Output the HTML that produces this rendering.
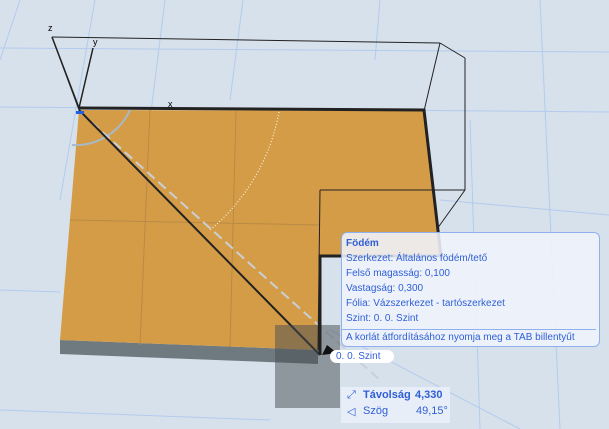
<!DOCTYPE html><html><head><style>
body{margin:0;width:609px;height:429px;overflow:hidden;background:#d7e1ec;font-family:"Liberation Sans",sans-serif}
.tip{position:absolute;left:341px;top:232px;width:257px;height:113px;border:1px solid #8fb0ee;border-radius:6px;background:rgba(240,244,252,.88);color:#2f5fd6;font-size:10px;line-height:15px}
.tip div{padding-left:4px;white-space:nowrap}
.st{position:absolute;color:#2f5fd6;font-size:11px;white-space:nowrap}
</style></head><body>
<svg width="609" height="429" style="position:absolute;left:0;top:0">
<g stroke="#b3cbee" stroke-width="1" fill="none">
<line x1="0" y1="48" x2="609" y2="52"/><line x1="0" y1="107" x2="609" y2="112"/>
<line x1="20" y1="0" x2="0" y2="60"/><line x1="95" y1="0" x2="60" y2="200"/><line x1="165" y1="0" x2="140" y2="200"/>
<line x1="243" y1="0" x2="230" y2="100"/><line x1="380" y1="0" x2="375" y2="60"/><line x1="540" y1="0" x2="560" y2="429"/>
<line x1="470" y1="120" x2="480" y2="429"/><line x1="330" y1="330" x2="520" y2="429"/><line x1="440" y1="200" x2="609" y2="215"/>
<line x1="0" y1="290" x2="60" y2="292"/><line x1="0" y1="410" x2="270" y2="420"/>
</g>
<polygon points="60,340 318,350 318,364 60,354" fill="#6f7a80"/>
<polygon points="79,110 424,111 441,255 320,255 318,350 60,340" fill="#d59c48"/>
<g stroke="#b98a45" stroke-width="1"><line x1="70" y1="220" x2="320" y2="225"/><line x1="150" y1="110" x2="140" y2="345"/><line x1="236" y1="111" x2="230" y2="347"/></g>
<path d="M279,112 A200,200 0 0 1 210,230" stroke="#fff" stroke-dasharray="1,2" fill="none"/>
<path d="M130,110 A60,60 0 0 1 72,145" stroke="#a9b8c6" stroke-width="2" fill="none"/>
<line x1="80" y1="112" x2="380" y2="380" stroke="#c8cfd6" stroke-width="2" stroke-dasharray="10,5"/>
<line x1="79" y1="110" x2="320" y2="355" stroke="#222" stroke-width="2"/>
<rect x="275" y="325" width="65" height="83" fill="rgba(70,75,80,.5)"/>
<g stroke="#222" fill="none" stroke-width="1">
<line x1="52" y1="37" x2="440" y2="43"/><line x1="440" y1="43" x2="465" y2="58"/><line x1="465" y1="58" x2="465" y2="190"/>
<line x1="440" y1="43" x2="424" y2="111"/><line x1="465" y1="190" x2="437" y2="229"/><line x1="52" y1="37" x2="79" y2="110"/>
<line x1="465" y1="190" x2="320" y2="190"/><line x1="320" y1="190" x2="318" y2="350"/>
</g>
<g stroke="#222" stroke-width="3" fill="none"><polyline points="79,108 424,110 441,256 320,256 320,355"/></g>
<g stroke="#222" stroke-width="1.5"><line x1="79" y1="108" x2="52" y2="37"/><line x1="79" y1="108" x2="93" y2="48"/></g>
<rect x="76" y="111" width="8" height="3" fill="#1f5fe0"/>
<text x="48" y="31" font-size="9" font-family="Liberation Sans">z</text>
<text x="93" y="45" font-size="9" font-family="Liberation Sans">y</text>
<text x="168" y="107" font-size="9" font-family="Liberation Sans">x</text>
<path d="M322,355 l5,-10 l10,8 z" fill="#111"/>
</svg>
<div class="tip">
<div style="font-weight:bold;margin-top:3px">Födém</div>
<div>Szerkezet: Általános födém/tető</div>
<div>Felső magasság: 0,100</div>
<div>Vastagság: 0,300</div>
<div>Fólia: Vázszerkezet - tartószerkezet</div>
<div>Szint: 0. 0. Szint</div>
<div style="border-top:1px solid #8fb0ee;margin:3px 3px 0 0;padding-top:0">A korlát átfordításához nyomja meg a TAB billentyűt</div>
</div>
<div style="position:absolute;left:330px;top:350px;width:58px;height:13px;background:#fff;border-radius:7px;color:#2f5fd6;font-size:10px;line-height:13px;padding-left:6px;white-space:nowrap">0. 0. Szint</div>
<div style="position:absolute;left:341px;top:387px;width:109px;height:36px;background:#e8eef8"></div>
<div class="st" style="left:347px;top:389px">⤢</div>
<div class="st" style="left:363px;top:389px;font-weight:bold">Távolság</div>
<div class="st" style="left:415px;top:389px;font-weight:bold">4,330</div>
<div class="st" style="left:347px;top:405px">◁</div>
<div class="st" style="left:363px;top:405px">Szög</div>
<div class="st" style="left:416px;top:405px">49,15°</div>
</body></html>
